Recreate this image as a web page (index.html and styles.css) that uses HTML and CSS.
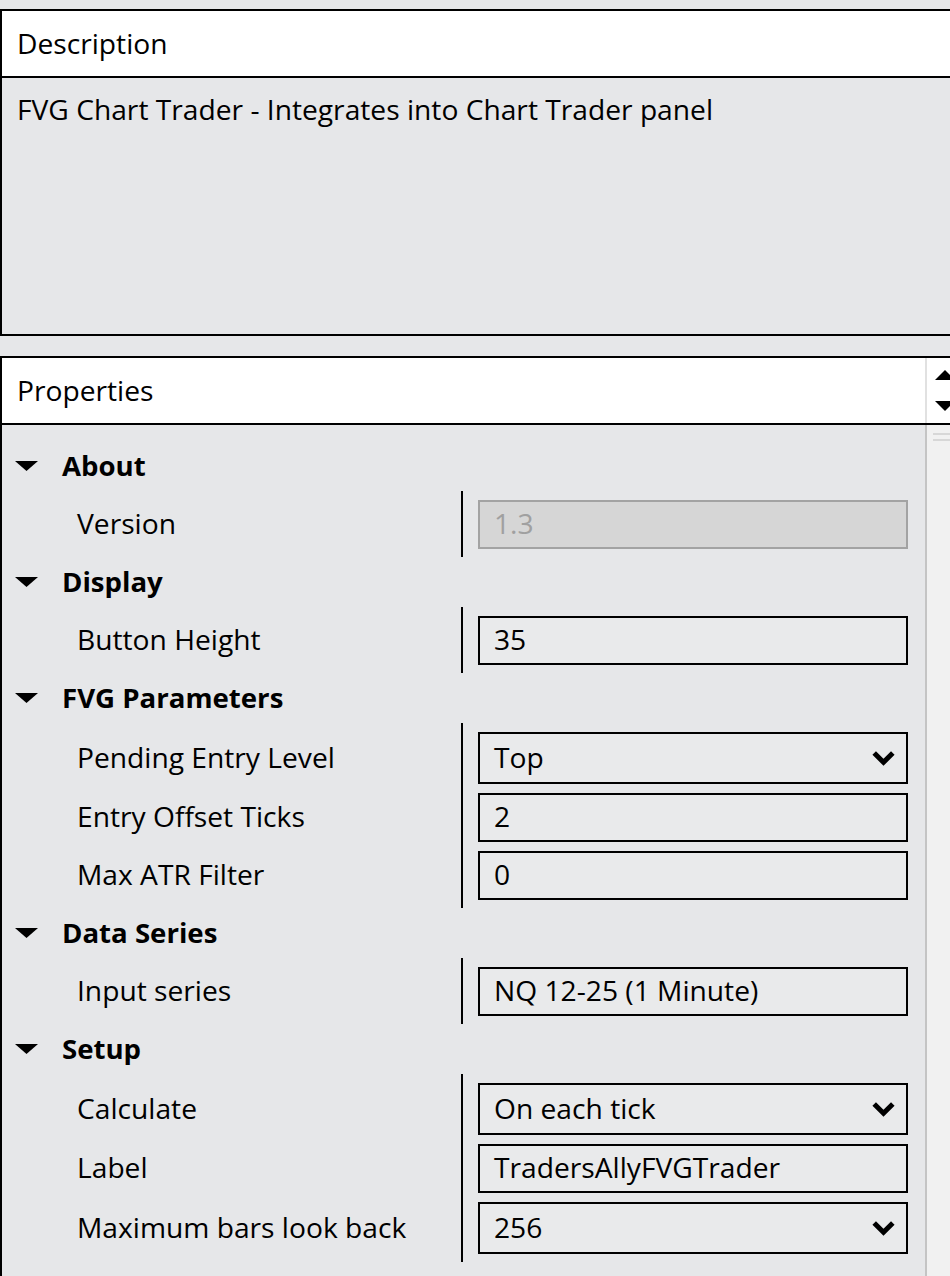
FILE: index.html
```html
<!DOCTYPE html>
<html>
<head>
<meta charset="utf-8">
<link rel="stylesheet" href="styles.css">
</head>
<body>
<section class="panel">
  <div class="panel-head">Description</div>
  <div class="desc-body">FVG Chart Trader - Integrates into Chart Trader panel</div>
</section>

<section class="panel props-panel">
  <div class="panel-head props-head">
    <span class="head-title">Properties</span>
    <div class="spin">
      <svg class="spin-arrow" width="20" height="10" viewBox="0 0 20 10"><polygon points="0,10 10,0 20,10" fill="#000"/></svg>
      <svg class="spin-arrow" width="20" height="10" viewBox="0 0 20 10"><polygon points="0,0 20,0 10,10" fill="#000"/></svg>
    </div>
  </div>
  <div class="props-body">
    <div class="props-list">

      <div class="group-head">
        <svg class="tri" width="23" height="10" viewBox="0 0 23 10"><polygon points="0,0 23,0 11.5,10" fill="#000"/></svg>
        <span>About</span>
      </div>
      <div class="props">
        <div class="label">Version</div>
        <div class="value"><div class="box disabled">1.3</div></div>
      </div>

      <div class="group-head">
        <svg class="tri" width="23" height="10" viewBox="0 0 23 10"><polygon points="0,0 23,0 11.5,10" fill="#000"/></svg>
        <span>Display</span>
      </div>
      <div class="props">
        <div class="label">Button Height</div>
        <div class="value"><div class="box">35</div></div>
      </div>

      <div class="group-head">
        <svg class="tri" width="23" height="10" viewBox="0 0 23 10"><polygon points="0,0 23,0 11.5,10" fill="#000"/></svg>
        <span>FVG Parameters</span>
      </div>
      <div class="props">
        <div class="label">Pending Entry Level</div>
        <div class="value"><div class="box combo"><span>Top</span><svg class="chev" width="23" height="17" viewBox="0 0 23 17"><path d="M2.2 4 L11.5 13.3 L20.8 4" fill="none" stroke="#000" stroke-width="5"/></svg></div></div>
        <div class="label">Entry Offset Ticks</div>
        <div class="value"><div class="box">2</div></div>
        <div class="label">Max ATR Filter</div>
        <div class="value"><div class="box">0</div></div>
      </div>

      <div class="group-head">
        <svg class="tri" width="23" height="10" viewBox="0 0 23 10"><polygon points="0,0 23,0 11.5,10" fill="#000"/></svg>
        <span>Data Series</span>
      </div>
      <div class="props">
        <div class="label">Input series</div>
        <div class="value"><div class="box">NQ 12-25 (1 Minute)</div></div>
      </div>

      <div class="group-head">
        <svg class="tri" width="23" height="10" viewBox="0 0 23 10"><polygon points="0,0 23,0 11.5,10" fill="#000"/></svg>
        <span>Setup</span>
      </div>
      <div class="props">
        <div class="label">Calculate</div>
        <div class="value"><div class="box combo"><span>On each tick</span><svg class="chev" width="23" height="17" viewBox="0 0 23 17"><path d="M2.2 4 L11.5 13.3 L20.8 4" fill="none" stroke="#000" stroke-width="5"/></svg></div></div>
        <div class="label">Label</div>
        <div class="value"><div class="box">TradersAllyFVGTrader</div></div>
        <div class="label">Maximum bars look back</div>
        <div class="value"><div class="box combo"><span>256</span><svg class="chev" width="23" height="17" viewBox="0 0 23 17"><path d="M2.2 4 L11.5 13.3 L20.8 4" fill="none" stroke="#000" stroke-width="5"/></svg></div></div>
      </div>

    </div>
    <div class="scrollbar">
      <span class="grip"></span>
      <span class="grip"></span>
    </div>
  </div>
</section>
</body>
</html>
```

FILE: styles.css
```css
html, body {
  margin: 0;
  padding: 0;
}
body {
  width: 950px;
  height: 1276px;
  overflow: hidden;
  background: #e6e7e9;
  font-family: "Open Sans", "Noto Sans", sans-serif;
  font-size: 28.2px;
  color: #000;
  padding-top: 9px;
  box-sizing: border-box;
}
.panel {
  border: 2px solid #000;
  border-right: none;
  background: #e6e7e9;
}
.panel-head {
  height: 65px;
  box-sizing: border-box;
  background: #fff;
  border-bottom: 2px solid #000;
  display: flex;
  align-items: center;
  padding: 0 0 2px 15px;
  height: 67px;
}
.desc-body {
  height: 256px;
  box-sizing: border-box;
  padding: 12px 0 0 15px;
  line-height: 38px;
}
.props-panel {
  margin-top: 20px;
  border-bottom: none;
  height: 920px;
  box-sizing: border-box;
  display: flex;
  flex-direction: column;
}
.props-head {
  padding: 0;
  align-items: stretch;
  flex: none;
}
.head-title {
  flex: 1;
  display: flex;
  align-items: center;
  padding: 0 0 2px 15px;
}
.spin {
  width: 23px;
  border-left: 2px solid #e1e1e1;
  overflow: hidden;
  display: flex;
  flex-direction: column;
  padding-top: 12px;
  gap: 21px;
}
.spin-arrow {
  display: block;
  flex: none;
  margin-left: 8px;
}
.props-body {
  display: flex;
  flex: 1;
  min-height: 0;
  overflow: hidden;
}
.props-list {
  flex: 1;
  padding-top: 16px;
}
.scrollbar {
  width: 23px;
  background: #f1f1f1;
  border-left: 2px solid #c4c4c4;
  display: flex;
  flex-direction: column;
  padding-top: 8px;
  gap: 4px;
}
.grip {
  display: block;
  height: 2px;
  margin-left: 6px;
  background: #d7d7d7;
}
.group-head {
  height: 50px;
  box-sizing: border-box;
  display: flex;
  align-items: center;
  padding: 0 0 2px 13px;
  font-weight: 700;
  font-size: 27.6px;
}
.tri {
  display: block;
  margin: 2px 24px 0 0;
}
.props {
  display: grid;
  grid-template-columns: 459px 1fr;
}
.label {
  display: flex;
  align-items: center;
  padding: 0 0 2px 75px;
}
.label:first-child {
  padding-top: 4px;
}
.label:nth-last-child(2) {
  padding-bottom: 6px;
}
.value {
  border-left: 2px solid #000;
  padding: 4.5px 17px 4.5px 15px;
}
.value:nth-child(2) {
  padding-top: 8.5px;
}
.value:last-child {
  padding-bottom: 8.5px;
}
.box {
  height: 49px;
  box-sizing: border-box;
  border: 2px solid #000;
  background: #e9eaeb;
  display: flex;
  align-items: center;
  padding: 0 11px 2px 14px;
}
.box.combo {
  height: 52px;
  justify-content: space-between;
}
.box.disabled {
  background: #d6d6d6;
  border-color: #a3a3a3;
  color: #a0a0a0;
}
.chev {
  display: block;
  margin-top: 2px;
}
```
